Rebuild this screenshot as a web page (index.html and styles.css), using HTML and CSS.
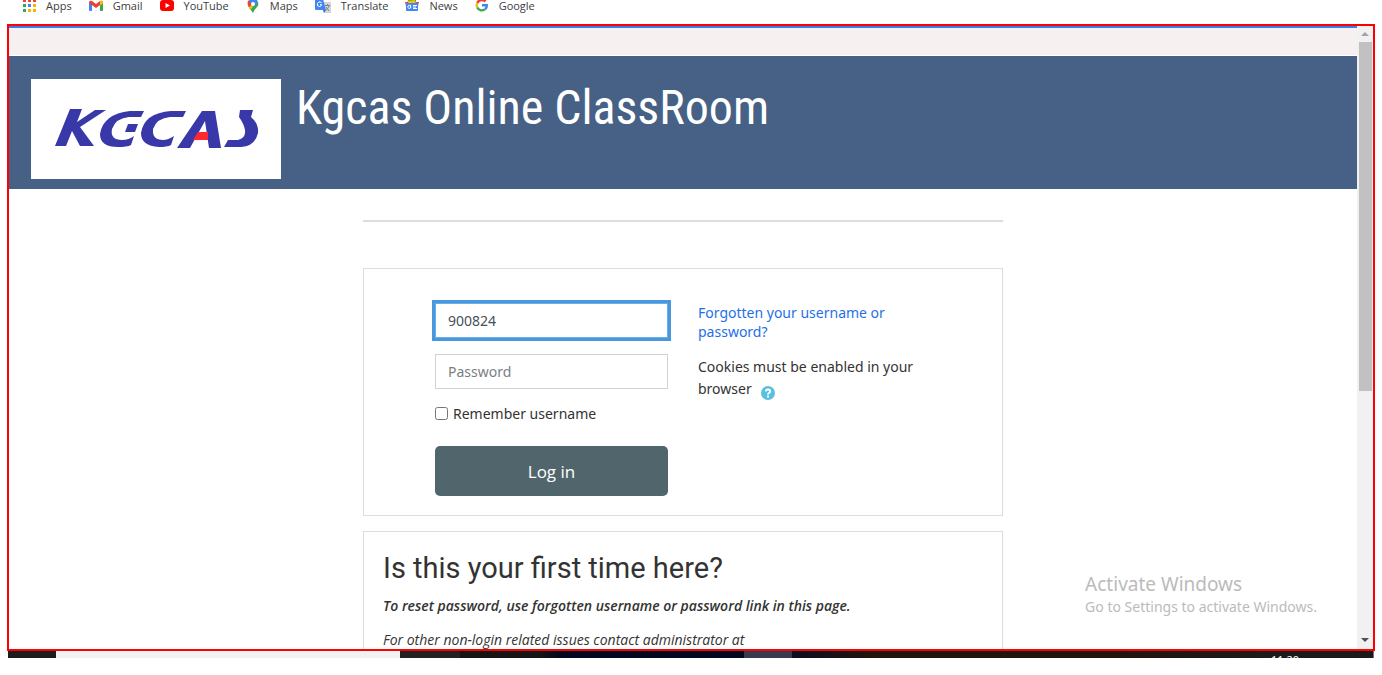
FILE: index.html
```html
<!DOCTYPE html>
<html lang="en">
<head>
<meta charset="utf-8">
<title>Kgcas Online ClassRoom</title>
<link rel="stylesheet" href="styles.css">
</head>
<body>
<div class="screen">
  <nav class="bookmarks" aria-label="Bookmarks">
    <a class="bookmark" href="#"><svg class="bookmark-icon" viewBox="0 0 14 14"><path fill="#ea4335" d="M1 0h3v3H1zM6 0h3v3H6zM11 0h3v3h-3z"/><path fill="#34a853" d="M1 5h3v3H1zM1 10h3v3H1z"/><path fill="#4285f4" d="M6 5h3v3H6z"/><path fill="#fbb300" d="M11 5h3v3h-3zM6 10h3v3H6zM11 10h3v3h-3z"/></svg>Apps</a>
    <a class="bookmark" href="#"><svg class="bookmark-icon" viewBox="0 0 14 14"><path fill="#4285f4" d="M0 3l3 2v7H1q-1 0-1-1z"/><path fill="#34a853" d="M11 5l3-2v8q0 1-1 1h-2z"/><path fill="#ea4335" d="M0 3q1-2 3-1l4 3 4-3q2-1 3 1v1L7 9 0 4z"/><path fill="#fbbc04" d="M11 2q2-1 3 1v1.500l-3 2z"/></svg>Gmail</a>
    <a class="bookmark" href="#"><svg class="bookmark-icon" viewBox="0 0 14 14"><rect width="14" height="11" y="1" rx="3" fill="#f00"/><path fill="#fff" d="M5.500 4v5L10 6.500z"/></svg>YouTube</a>
    <a class="bookmark" href="#"><svg class="bookmark-icon" viewBox="0 0 14 14"><path fill="#34a853" d="M2 7l5 7q1-3 4-6 2-2 1-5z"/><path fill="#fbbc04" d="M2 6l5-4 2 4-5 5z"/><path fill="#ea4335" d="M3 1l4 4-4 3Q0 4 3 1z"/><path fill="#4285f4" d="M3 1q4-3 8 0l1 2-5 5-2-3z"/><circle cx="7" cy="5" r="2" fill="#fff"/></svg>Maps</a>
    <a class="bookmark" href="#"><svg class="bookmark-icon wide" viewBox="0 0 16 14"><path fill="#d5d5d5" d="M7 3h8q1 0 1 1v10H9z"/><path fill="#4285f4" d="M0 0h8l3 11H1q-1 0-1-1z"/><path fill="#3367d6" d="M8 11h3l-2 3z"/><path fill="none" stroke="#fff" d="M6.500 3.500q-3-2-4 1t2 3q2 0 2-2H5"/><path fill="none" stroke="#7b8794" d="M10 6.500h5M12.500 5v1.500M14 7q-1 3-3 4M11 8l3 4"/></svg>Translate</a>
    <a class="bookmark" href="#"><svg class="bookmark-icon" viewBox="0 0 14 14"><path fill="#34a853" d="M3 0h8v4H3z"/><path fill="#fbbc04" d="M2 2l8-1 1 4H3z"/><path fill="#ea4335" d="M0 3h3l1 4H1z"/><path fill="#ea4335" d="M11 3h3l-1 4h-3z"/><path fill="#4285f4" d="M1 4h12v7q0 1-1 1H2q-1 0-1-1z"/><path fill="none" stroke="#fff" d="M6 6.500q-2-1-3 .5t1 2.500q2 0 2-2H5M8 6.500h4M8 8h3M8 9.500h4"/></svg>News</a>
    <a class="bookmark" href="#"><svg class="bookmark-icon" viewBox="0 0 14 14"><g fill="none" stroke-width="2.400"><path stroke="#ea4335" d="M2.300 4A5 5 0 0 1 10.500 2.500"/><path stroke="#fbbc04" d="M2.300 4A5 5 0 0 0 2.300 8.500"/><path stroke="#34a853" d="M2.300 8.500A5 5 0 0 0 10.300 10"/><path stroke="#4285f4" d="M10.300 10Q12 8.500 11.800 6.300H7"/></g></svg>Google</a>
  </nav>

  <div class="frame">
    <div class="page">
      <div class="topbar"></div>
      <header class="header">
        <svg class="logo" viewBox="0 0 250 100" role="img" aria-label="KGCAS">
          <rect width="250" height="100" fill="#fff"/>
          <g fill="#3838a8">
            <path d="M39 30H51L46 43L64 31H75L49 48L63 67H49L41 52L35 67H24Z"/>
            <path d="M113 32L110 38H98Q85 39 81 50Q79 61 91 61Q98 61 103 57L100 66Q96 68 87 68Q69 68 69 55Q72 35 99 32Z"/>
            <path d="M97 45H107L104 53H94Z"/>
            <path d="M155 32L152 38H139Q126 39 122 50Q121 61 132 61Q137 61 143 57L140 66Q136 68 128 68Q110 67 110 54Q113 34 140 32Z"/>
            <path d="M171 32H184L190 69H178L174 42L159 69H146Z"/>
            <path d="M209 31H222L220 38Q228 45 227 54Q224 67 210 68H193L197 61H207Q215 59 214 51Q213 45 208 38Z"/>
          </g>
          <path fill="#ff2832" d="M167 53H177V61H162Z"/>
        </svg>
        <h1 class="site-title">Kgcas Online ClassRoom</h1>
      </header>
      <main class="main">
        <hr class="rule">
        <section class="card login">
          <form class="login-form">
            <input class="field focused" type="text" value="900824" aria-label="Username">
            <input class="field" type="password" placeholder="Password" aria-label="Password">
            <label class="remember"><input class="check" type="checkbox">Remember username</label>
            <button class="submit" type="button">Log in</button>
          </form>
          <div class="login-help">
            <a class="forgot" href="#">Forgotten your username or password?</a>
            <p class="cookies">Cookies must be enabled in your browser <svg class="help-icon" viewBox="0 0 14 14" role="img" aria-label="Help"><circle cx="7" cy="7" r="7" fill="#5bc0de"/><path d="M4.800 5.400Q5 3.500 7 3.500T9.200 5.300Q9.200 6.300 7.900 7Q7 7.500 7 8.400" fill="none" stroke="#fff" stroke-width="1.900"/><path fill="#fff" d="M6 9.500h2v2H6z"/></svg></p>
          </div>
        </section>
        <section class="card first-time">
          <h2 class="first-title">Is this your first time here?</h2>
          <p class="note strong">To reset password, use forgotten username or password link in this page.</p>
          <p class="note">For other non-login related issues contact administrator at</p>
        </section>
      </main>
    </div>
    <div class="scrollbar" aria-hidden="true">
      <svg class="arrow" viewBox="0 0 16 16"><path fill="#a3a3a3" d="M4 10h8L8 6z"/></svg>
      <div class="track"><div class="thumb"></div></div>
      <svg class="arrow" viewBox="0 0 16 16"><path fill="#505050" d="M4 5h8L8 9z"/></svg>
    </div>
    <div class="watermark">
      <div class="watermark-title">Activate Windows</div>
      <div class="watermark-text">Go to Settings to activate Windows.</div>
    </div>
  </div>
  <div class="taskbar"><div class="search"></div><div class="tasks"></div><div class="active-task"></div><div class="tray"><span class="clock">11:20</span></div></div>
</div>
</body>
</html>
```
FILE: styles.css
```css
* { box-sizing: border-box; }
body { margin: 0; background: #fff; color: #333; font-family: "Noto Sans", "Open Sans", sans-serif; font-size: 14px; }
.screen { display: flex; flex-direction: column; height: 100vh; padding: 0 7px 17px; overflow: hidden; }
.bookmarks { flex: none; display: flex; gap: 17px; height: 24px; padding-left: 15px; }
.bookmark { display: flex; gap: 10px; height: 12px; align-items: center; font: 11px/12px "Open Sans", sans-serif; color: #3c4043; text-decoration: none; }
.bookmark-icon { width: 14px; height: 14px; }
.bookmark-icon.wide { width: 16px; }
.frame { position: relative; flex: 1; min-height: 0; display: flex; border: 2px solid #f00; }
.page { flex: 1; min-width: 0; overflow: hidden; }
.topbar { height: 30px; background: #f6f1f0; border-top: 2px solid #3b7bf0; border-bottom: 1px solid #fff; }
.header { display: flex; align-items: flex-start; gap: 15px; padding: 23px 22px 10px; background: #466185; }
.logo { flex: none; width: 250px; height: 100px; }
.site-title { margin: 0; font: 400 48px/58px "Roboto Condensed", Roboto, sans-serif; color: #fff; }
.main { max-width: 640px; margin: 0 auto; padding-top: 31px; }
.rule { margin: 0 0 46px; border: 0; border-top: 2px solid #ddd; }
.card { border: 1px solid #ddd; margin-bottom: 15px; }
.login { display: grid; grid-template-columns: 233px 233px; gap: 30px; padding: 34px 71px 19px; }
.login-form { display: flex; flex-direction: column; }
.field { width: 100%; height: 35px; margin: 0 0 16px; padding: 0 12px; border: 1px solid #ced4da; background: #fff; color: #495057; font: inherit; outline: 0; }
.field::placeholder { color: #7a7f84; opacity: 1; }
.focused { border-color: #66afe9; box-shadow: 0 0 0 3px #4a98db; }
.remember { display: flex; align-items: center; gap: 5px; height: 16px; margin-bottom: 25px; }
.check { width: 13px; height: 13px; margin: 0; }
.submit { height: 50px; border: 0; border-radius: 5px; background: #51666c; color: #fff; font: 17px "Open Sans", sans-serif; }
.forgot { display: block; line-height: 19px; color: #1f6fe8; text-decoration: none; }
.cookies { margin: 15px 0 0; line-height: 22px; }
.help-icon { width: 14px; height: 14px; margin-left: 6px; vertical-align: -6px; }
.first-time { padding: 16px 19px; font-family: "Open Sans", sans-serif; }
.first-title { margin: 0 0 8px; font: 400 29px/40px Roboto, sans-serif; }
.note { margin: 0 0 14px; font-style: italic; line-height: 20px; }
.strong { font-weight: 600; }
.scrollbar { flex: none; display: flex; flex-direction: column; width: 16px; background: #f1f1f1; }
.arrow { width: 16px; height: 16px; }
.track { flex: 1; padding: 0 1px 0 2px; }
.thumb { height: 59%; background: #c1c1c1; }
.watermark { position: absolute; right: 56px; bottom: 32px; color: #bbb; }
.watermark-title { font-size: 19px; line-height: 26px; }
.watermark-text { font-size: 14px; line-height: 20px; }
.taskbar { flex: none; display: flex; height: 7px; margin: 0 1px; background: #1d1c1c; overflow: hidden; }
.search { width: 344px; margin-left: 48px; background: #f2f2f2; }
.tasks { width: 344px; background: linear-gradient(90deg, #222 0 60px, #151515 60px 140px, #020820 160px); }
.active-task { width: 48px; background: #383b4d; }
.tray { flex: 1; padding-right: 74px; text-align: right; background: linear-gradient(90deg, #0b0d24, #21130d 80px, #21130d 300px, #1b1a1a 480px); border-right: 1px solid #777; }
.clock { display: block; padding-top: 2px; font-size: 11px; line-height: 14px; color: #fff; }
```
